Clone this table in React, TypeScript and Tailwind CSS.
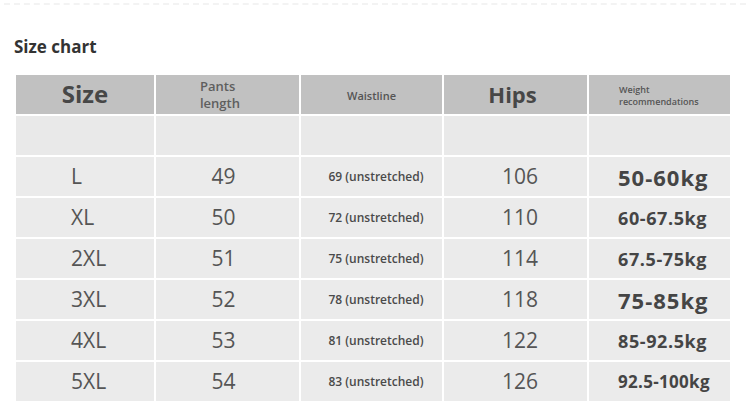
import React from "react";

type Row = {
  size: string;
  pants: string;
  waist: string;
  hips: string;
  weight: string;
  wcls: string;
};

const rows: Row[] = [
  { size: "L", pants: "49", waist: "69 (unstretched)", hips: "106", weight: "50-60kg", wcls: "text-[22px] tracking-[1px]" },
  { size: "XL", pants: "50", waist: "72 (unstretched)", hips: "110", weight: "60-67.5kg", wcls: "text-[18px] tracking-[0.6px]" },
  { size: "2XL", pants: "51", waist: "75 (unstretched)", hips: "114", weight: "67.5-75kg", wcls: "text-[18px] tracking-[0.6px]" },
  { size: "3XL", pants: "52", waist: "78 (unstretched)", hips: "118", weight: "75-85kg", wcls: "text-[22px] tracking-[1px]" },
  { size: "4XL", pants: "53", waist: "81 (unstretched)", hips: "122", weight: "85-92.5kg", wcls: "text-[18px] tracking-[0.6px]" },
  { size: "5XL", pants: "54", waist: "83 (unstretched)", hips: "126", weight: "92.5-100kg", wcls: "text-[17px] tracking-[0.3px]" },
];

export default function App() {
  return (
    <div
      className="w-[750px] h-[403px] bg-white overflow-hidden pt-[3px]"
      style={{ fontFamily: '"Open Sans", "Noto Sans", sans-serif' }}
    >
      <div className="mx-[4px] border-t-2 border-dashed border-[#f3f3f3]" />
      <div className="pl-[14px] mt-[30px] h-[24px] leading-[24px] text-[17px] font-bold text-[#333333]">
        Size chart
      </div>
      <div className="ml-[16px] mt-[16px] grid grid-cols-[138px_143px_141px_143px_141px] auto-rows-[39px] gap-[2px] w-[714px]">
        {/* header */}
        <div className="bg-[#c1c1c1] flex items-center justify-center text-[24px] font-bold text-[#474747] leading-none pb-[1px]">
          Size
        </div>
        <div className="bg-[#c1c1c1] flex flex-col justify-center pl-[44px] text-[13px] font-semibold text-[#5e5e5e] leading-[17px]">
          <span>Pants</span>
          <span>length</span>
        </div>
        <div className="bg-[#c1c1c1] flex items-center justify-center text-[11px] font-semibold text-[#555555] pt-[3px]">
          Waistline
        </div>
        <div className="bg-[#c1c1c1] flex items-center justify-center text-[22px] font-bold text-[#474747] leading-none pb-[1px] pr-[6px]">
          Hips
        </div>
        <div className="bg-[#c1c1c1] flex flex-col justify-center pl-[30px] text-[9px] font-semibold text-[#555555] leading-[12px] pt-[2px]">
          <span>Weight</span>
          <span>recommendations</span>
        </div>

        {/* blank row */}
        <div className="bg-[#e9e9e9]" />
        <div className="bg-[#e9e9e9]" />
        <div className="bg-[#e9e9e9]" />
        <div className="bg-[#e9e9e9]" />
        <div className="bg-[#e9e9e9]" />

        {rows.map((r) => (
          <React.Fragment key={r.size}>
            <div className="bg-[#ebebeb] flex items-center pl-[55px] text-[21px] text-[#555555] leading-none">
              {r.size}
            </div>
            <div className="bg-[#ebebeb] flex items-center justify-center pr-[8px] text-[21px] text-[#555555] leading-none">
              {r.pants}
            </div>
            <div className="bg-[#ebebeb] flex items-center justify-center pl-[9px] text-[12px] font-semibold text-[#4a4a4a] leading-none">
              {r.waist}
            </div>
            <div className="bg-[#ebebeb] flex items-center justify-center pl-[9px] text-[21px] text-[#555555] leading-none">
              {r.hips}
            </div>
            <div className={`bg-[#ebebeb] flex items-center pl-[29px] font-bold text-[#454545] leading-none ${r.wcls}`}>
              {r.weight}
            </div>
          </React.Fragment>
        ))}
      </div>
    </div>
  );
}
